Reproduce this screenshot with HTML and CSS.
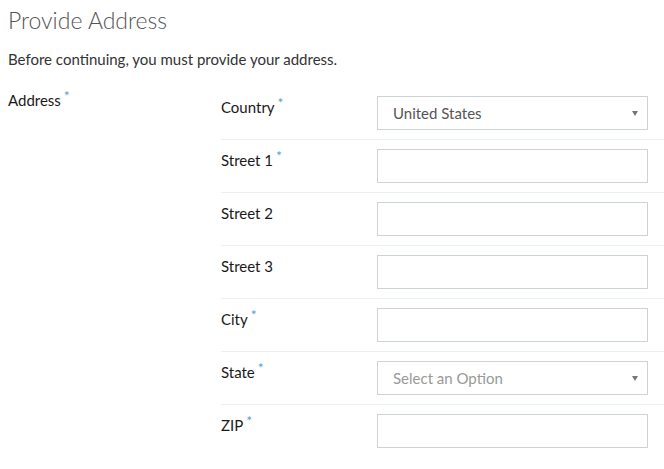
FILE: index.html
```html
<!DOCTYPE html>
<html lang="en">
<head>
  <meta charset="UTF-8">
  <meta name="viewport" content="width=device-width, initial-scale=1.0">
  <title>Provide Address</title>
  <link rel="stylesheet" href="styles.css">
</head>
<body>
  <div class="page">
    <h1 class="page-title">Provide Address</h1>
    <p class="intro">Before continuing, you must provide your address.</p>

    <!-- Address block -->
    <div class="address-group">
      <div class="group-label">Address<span class="req">*</span></div>
      <div class="fields">
        <div class="field-row">
          <label class="field-label" for="country">Country<span class="req">*</span></label>
          <div class="select-wrap">
            <select id="country" class="select">
              <option>United States</option>
            </select>
          </div>
        </div>
        <div class="field-row">
          <label class="field-label" for="street1">Street 1<span class="req">*</span></label>
          <input id="street1" class="text-input" type="text">
        </div>
        <div class="field-row">
          <label class="field-label" for="street2">Street 2</label>
          <input id="street2" class="text-input" type="text">
        </div>
        <div class="field-row">
          <label class="field-label" for="street3">Street 3</label>
          <input id="street3" class="text-input" type="text">
        </div>
        <div class="field-row">
          <label class="field-label" for="city">City<span class="req">*</span></label>
          <input id="city" class="text-input" type="text">
        </div>
        <div class="field-row">
          <label class="field-label" for="state">State<span class="req">*</span></label>
          <div class="select-wrap">
            <select id="state" class="select placeholder">
              <option>Select an Option</option>
            </select>
          </div>
        </div>
        <div class="field-row">
          <label class="field-label" for="zip">ZIP<span class="req">*</span></label>
          <input id="zip" class="text-input" type="text">
        </div>
      </div>
    </div>
  </div>
</body>
</html>
```

FILE: styles.css
```css
body {
  margin: 0;
  padding: 0;
  font-family: Lato, "Open Sans", sans-serif;
  font-size: 15px;
  color: #333;
  background-color: #fff;
}
.page {
  padding-left: 8px;
}
.page-title {
  margin: 7px 0 0;
  font-size: 23px;
  font-weight: 300;
  line-height: 1.2;
  color: #555;
}
.intro {
  margin: 14px 0 0;
  line-height: 20px;
}
.address-group {
  display: flex;
  margin-top: 18px;
}
.group-label {
  width: 213px;
  flex-shrink: 0;
  margin-top: 3px;
  line-height: 20px;
  color: #1a1a1a;
}
.fields {
  flex: 1;
}
.field-row {
  display: flex;
  padding: 9px 16px 9px 0;
  border-bottom: 1px solid #edf0f3;
}
.field-row:last-child {
  border-bottom: none;
}
.field-label {
  width: 156px;
  flex-shrink: 0;
  margin-top: 1px;
  line-height: 20px;
  color: #1a1a1a;
}
.req {
  margin-left: 3px;
  font-size: 14px;
  vertical-align: 5px;
  line-height: 0;
  color: #5b9fd3;
}
.text-input,
.select {
  box-sizing: border-box;
  width: 271px;
  height: 34px;
  margin: 0;
  border: 1px solid #ccd4d6;
  border-radius: 0;
  background-color: #fff;
  font-family: inherit;
  font-size: 15px;
}
.select-wrap {
  position: relative;
  width: 271px;
}
.select {
  appearance: none;
  -webkit-appearance: none;
  padding: 0 30px 0 15px;
  color: #555;
}
.select.placeholder {
  color: #999;
}
.select-wrap::after {
  content: "";
  position: absolute;
  right: 10px;
  top: 15px;
  border-left: 3.5px solid transparent;
  border-right: 3.5px solid transparent;
  border-top: 5px solid #777;
  pointer-events: none;
}
```
